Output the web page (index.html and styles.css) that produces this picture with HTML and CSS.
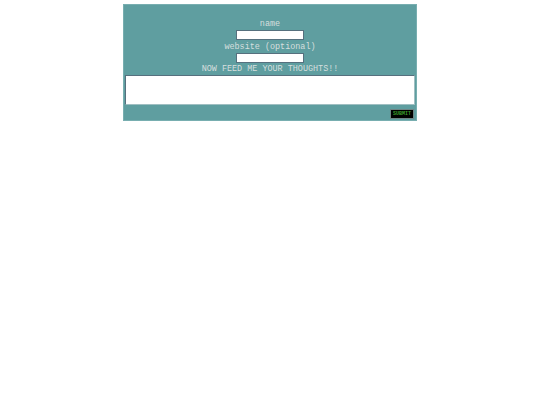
FILE: index.html
```html
<!DOCTYPE html>
<html>
<head>
<meta charset="utf-8">
<link rel="stylesheet" href="styles.css">
</head>
<body>
<form class="box">
  <label class="lbl">name</label>
  <input class="field" type="text">
  <label class="lbl">website (optional)</label>
  <input class="field" type="text">
  <label class="lbl last">NOW FEED ME YOUR THOUGHTS!!</label>
  <textarea class="thoughts"></textarea>
  <div class="actions"><button class="submit" type="button">SUBMIT</button></div>
</form>
</body>
</html>
```
FILE: styles.css
```css
html, body {
  margin: 0;
  padding: 0;
  background: #ffffff;
}
body {
  padding-top: 4px;
}
.box {
  width: 294px;
  box-sizing: border-box;
  margin: 0 auto;
  background: #5f9ea0;
  border: 1px solid #78aeb0;
  padding: 12px 1px 1px 1px;
  display: flex;
  flex-direction: column;
  align-items: center;
  font-family: "Liberation Mono", "DejaVu Sans Mono", monospace;
  font-size: 8.45px;
  color: #d6dede;
}
.lbl {
  display: block;
  box-sizing: border-box;
  height: 13px;
  padding-top: 1px;
  line-height: 12px;
  text-align: center;
}
.lbl.last {
  height: 12px;
  line-height: 11px;
}
.field {
  width: 68px;
  height: 10px;
  box-sizing: border-box;
  margin: 0;
  padding: 0;
  background: #ffffff;
  border: 1px solid #56707e;
}
.thoughts {
  width: 290px;
  height: 30px;
  box-sizing: border-box;
  margin: 0;
  padding: 0;
  resize: none;
  background: #ffffff;
  border: 1px solid #56707e;
  border-right-color: #9fbfc2;
  border-bottom-color: #9fbfc2;
}
.actions {
  align-self: stretch;
  display: flex;
  justify-content: flex-end;
  padding-top: 4px;
  padding-right: 1px;
}
.submit {
  width: 24px;
  height: 10px;
  box-sizing: border-box;
  margin: 0;
  padding: 0;
  background: #000000;
  border: 1px solid #6f8585;
  color: #3b9a2a;
  font-family: "Liberation Mono", "DejaVu Sans Mono", monospace;
  font-size: 5px;
  line-height: 8px;
  font-weight: bold;
  text-align: center;
}
```
